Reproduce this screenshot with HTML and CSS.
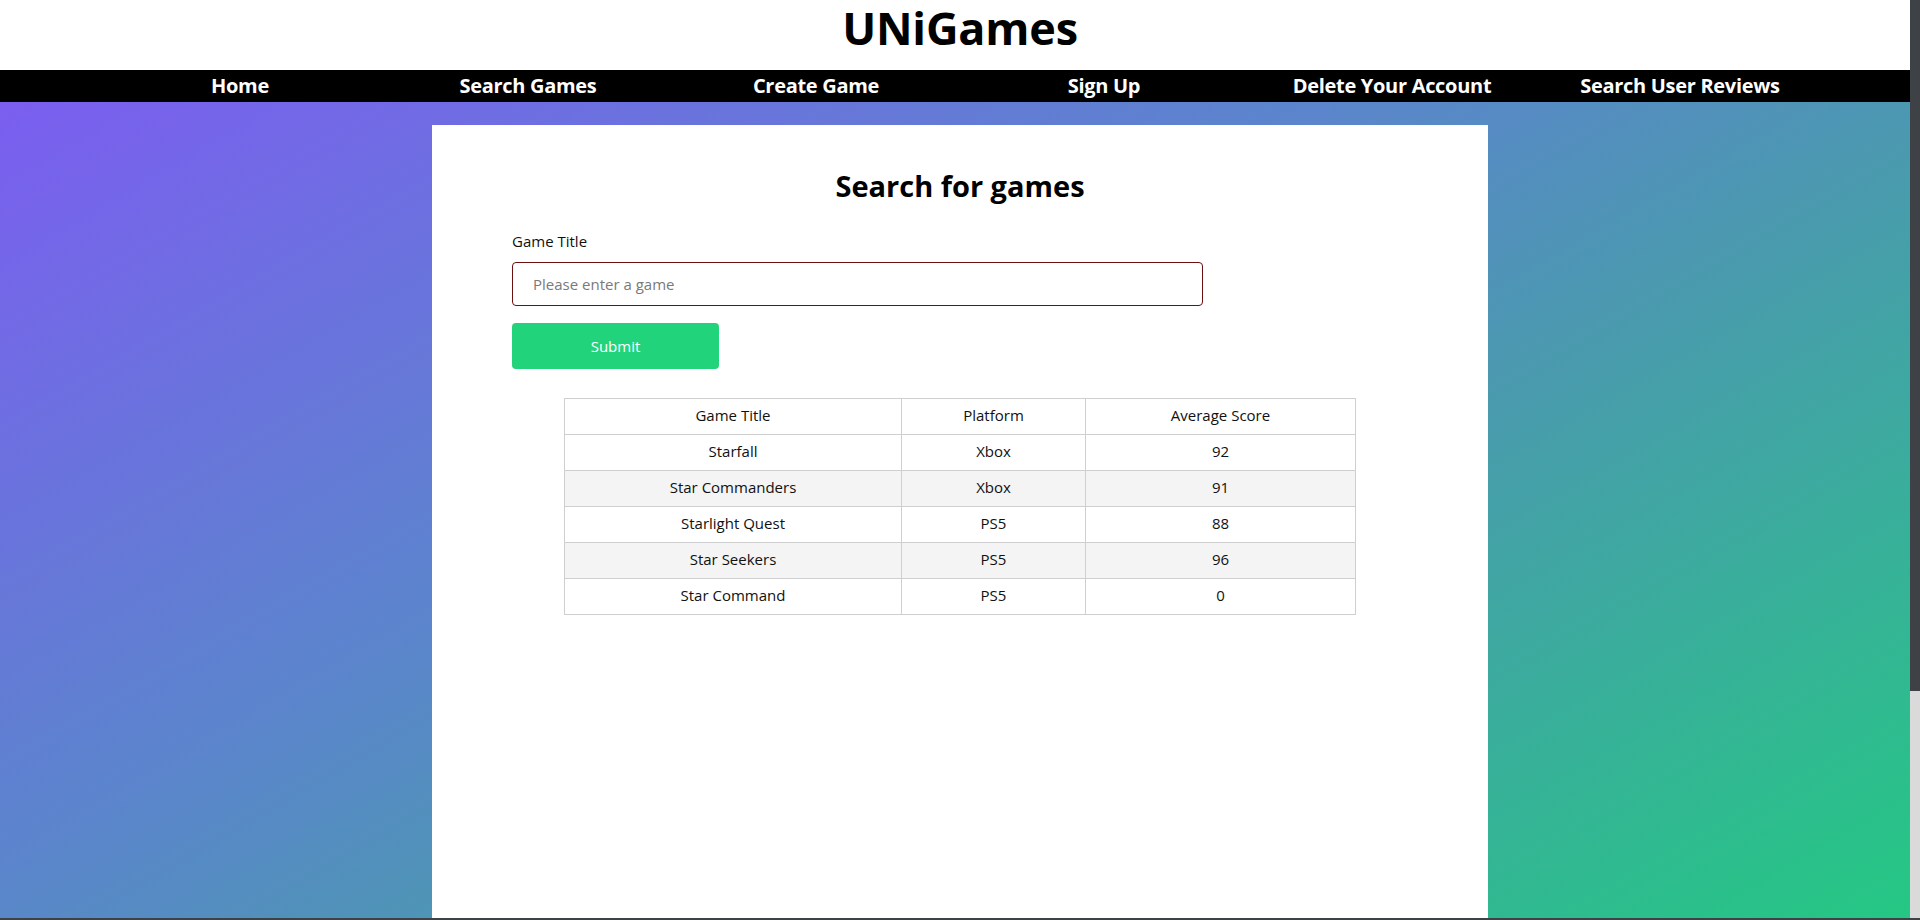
FILE: index.html
```html
<!DOCTYPE html>
<html lang="en">
<head>
<meta charset="utf-8">
<title>UNiGames</title>
<link rel="stylesheet" href="styles.css">
</head>
<body>
<header class="site-header">
  <h1 class="brand">UNiGames</h1>
</header>
<nav class="site-nav">
  <a class="nav-link" href="#">Home</a>
  <a class="nav-link" href="#">Search Games</a>
  <a class="nav-link" href="#">Create Game</a>
  <a class="nav-link" href="#">Sign Up</a>
  <a class="nav-link" href="#">Delete Your Account</a>
  <a class="nav-link" href="#">Search User Reviews</a>
</nav>
<main class="page">
  <section class="card">
    <h2 class="card-title">Search for games</h2>
    <form class="search-form">
      <label class="field-label" for="game">Game Title</label>
      <input class="field-input" id="game" type="text" placeholder="Please enter a game">
      <button class="submit-btn" type="button">Submit</button>
    </form>
    <table class="results">
      <colgroup>
        <col class="col-title">
        <col class="col-platform">
        <col class="col-score">
      </colgroup>
      <thead>
        <tr><th>Game Title</th><th>Platform</th><th>Average Score</th></tr>
      </thead>
      <tbody>
        <tr><td>Starfall</td><td>Xbox</td><td>92</td></tr>
        <tr><td>Star Commanders</td><td>Xbox</td><td>91</td></tr>
        <tr><td>Starlight Quest</td><td>PS5</td><td>88</td></tr>
        <tr><td>Star Seekers</td><td>PS5</td><td>96</td></tr>
        <tr><td>Star Command</td><td>PS5</td><td>0</td></tr>
      </tbody>
    </table>
  </section>
</main>
<div class="fake-scrollbar"></div>
<div class="window-edge"></div>
</body>
</html>
```
FILE: styles.css
```css
html, body {
  margin: 0;
  padding: 0;
  height: 100%;
  overflow: hidden;
}

body {
  font-family: "Open Sans", "Liberation Sans", sans-serif;
  color: #111;
  background: #fff;
}

.site-header {
  height: 70px;
  box-sizing: border-box;
  padding-top: 5px;
  background: #fff;
  text-align: center;
}

.brand {
  margin: 0;
  font-size: 45px;
  line-height: 45px;
  font-weight: 700;
  color: #000;
  letter-spacing: -0.2px;
}

.site-nav {
  height: 32px;
  background: #000;
  display: grid;
  grid-template-columns: repeat(6, 288px);
  justify-content: center;
}

.nav-link {
  color: #fff;
  text-decoration: none;
  font-weight: 700;
  font-size: 20px;
  line-height: 32px;
  text-align: center;
  letter-spacing: -0.3px;
}

.page {
  height: calc(100vh - 102px);
  box-sizing: border-box;
  padding-top: 23px;
  display: flex;
  justify-content: center;
  background: linear-gradient(150deg, #7b5ef0 0%, #5b85cc 40%, #4a9aae 60%, #24c883 100%);
}

.card {
  width: 1056px;
  box-sizing: border-box;
  padding: 41px 80px 0;
  background: #fff;
}

.card-title {
  margin: 0;
  text-align: center;
  font-size: 29px;
  line-height: 40px;
  font-weight: 700;
  color: #000;
}

.search-form {
  display: flex;
  flex-direction: column;
  align-items: flex-start;
}

.field-label {
  margin-top: 24px;
  font-size: 15px;
  line-height: 22px;
  color: #111;
}

.field-input {
  margin-top: 10px;
  width: 691px;
  height: 44px;
  box-sizing: border-box;
  padding: 0 20px;
  border: 1px solid #6a1010;
  border-radius: 4px;
  font-family: inherit;
  font-size: 15px;
  color: #111;
  outline: none;
}

.field-input::placeholder {
  color: #7a7a7a;
}

.submit-btn {
  margin-top: 17px;
  width: 207px;
  height: 46px;
  border: none;
  border-radius: 4px;
  background: #21d47c;
  color: #fff;
  font-family: inherit;
  font-size: 15px;
}

.results {
  width: 792px;
  margin: 29px auto 0;
  border-collapse: collapse;
  font-size: 15px;
  color: #111;
}

.col-title { width: 337px; }
.col-platform { width: 184px; }

.results th,
.results td {
  height: 36px;
  box-sizing: border-box;
  padding: 0 0 3px;
  border: 1px solid #cfcfcf;
  text-align: center;
  font-weight: 400;
  vertical-align: middle;
}

.results tbody tr:nth-child(even) {
  background: #f4f4f4;
}

.fake-scrollbar {
  position: fixed;
  top: 0;
  right: 0;
  width: 10px;
  height: 100%;
  background: linear-gradient(#3e4247 0, #3e4247 691px, #dadada 691px, #dadada 100%);
}

.window-edge {
  position: fixed;
  left: 0;
  right: 0;
  bottom: 0;
  height: 2px;
  background: #3e4247;
}
```
